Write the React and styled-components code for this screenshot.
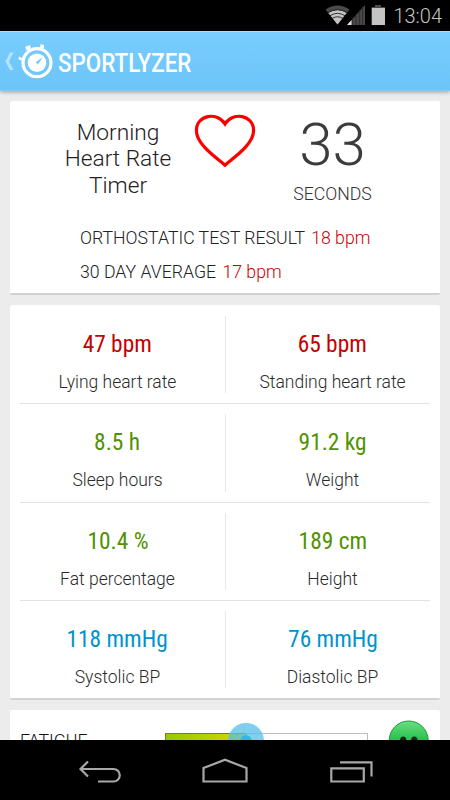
import React from 'react';
import styled, { createGlobalStyle, css } from 'styled-components';

const METRICS = [
  [
    { id: 'lying', value: '47 bpm', label: 'Lying heart rate', tone: 'heart' },
    { id: 'standing', value: '65 bpm', label: 'Standing heart rate', tone: 'heart' },
  ],
  [
    { id: 'sleep', value: '8.5 h', label: 'Sleep hours', tone: 'body' },
    { id: 'weight', value: '91.2 kg', label: 'Weight', tone: 'body' },
  ],
  [
    { id: 'fat', value: '10.4 %', label: 'Fat percentage', tone: 'body' },
    { id: 'height', value: '189 cm', label: 'Height', tone: 'body' },
  ],
  [
    { id: 'systolic', value: '118 mmHg', label: 'Systolic BP', tone: 'pressure' },
    { id: 'diastolic', value: '76 mmHg', label: 'Diastolic BP', tone: 'pressure' },
  ],
];

const TONES = {
  heart: '#c40000',
  body: '#519200',
  pressure: '#0093cc',
};

const App = () => (
  <>
    <GlobalStyle />
    <Phone>
      <StatusBar>
        <StatusIcons />
        <Clock>13:04</Clock>
      </StatusBar>
      <ActionBar>
        <BrandMark />
        <Brand>SPORTLYZER</Brand>
      </ActionBar>
      <Content>
        <TimerCard>
          <TimerTop>
            <TimerTitle>
              Morning
              <br />
              Heart Rate
              <br />
              Timer
            </TimerTitle>
            <Heart />
            <Countdown>
              <Count>33</Count>
              <Unit>SECONDS</Unit>
            </Countdown>
          </TimerTop>
          <Result>
            ORTHOSTATIC TEST RESULT <em>18 bpm</em>
          </Result>
          <Result>
            30 DAY AVERAGE <em>17 bpm</em>
          </Result>
        </TimerCard>
        <MetricsCard>
          {METRICS.map((row) => (
            <MetricRow key={row[0].id}>
              {row.map((item) => (
                <Metric key={item.id}>
                  <Value $tone={item.tone}>{item.value}</Value>
                  <Label>{item.label}</Label>
                </Metric>
              ))}
            </MetricRow>
          ))}
        </MetricsCard>
        <FatigueCard>
          <FatigueLabel>FATIGUE</FatigueLabel>
          <Track>
            <Fill />
            <Thumb />
          </Track>
          <Smiley />
        </FatigueCard>
      </Content>
      <NavBar>
        <NavIcons />
      </NavBar>
    </Phone>
  </>
);

export default App;

const StatusIcons = () => (
  <svg width="60" height="31" viewBox="325 0 60 31">
    <path d="M325.500 9.500Q337.500 1.500 349.500 9.500L337.500 24.500Z" fill="#4b4b4b" />
    <path d="M328.400 13Q337.500 7.500 346.600 13L337.500 24.500Z" fill="#c4c4c4" />
    <g fill="none" stroke="#222" strokeWidth=".9">
      <path d="M327.500 12.700Q337.500 6.300 347.500 12.700" />
      <path d="M330 15.700Q337.500 11 345 15.700" />
      <path d="M332 18.500Q337.500 15 343 18.500" />
    </g>
    <path d="M365 5V25H347Z" fill="#464646" />
    <path d="M351.500 20V25H347Z" fill="#e0e0e0" />
    <path d="M352.500 18V25M356 14V25M359.500 10V25M362.500 7V25" stroke="#2c2c2c" strokeWidth=".8" />
    <path d="M375 5H381V7H385V9H371.700V7H375Z" fill="#4b4b4b" />
    <path d="M371.700 8H385V25H371.700Z" fill="#c4c4c4" />
  </svg>
);

const BrandMark = () => (
  <svg width="54" height="60" viewBox="0 32 54 60">
    <path d="M10 52.500H13.500L9 61.500L13.500 70H10L5.500 61.500Z" fill="#b5e4ff" />
    <circle cx="37" cy="62.700" r="14" fill="none" stroke="#fff" strokeWidth="3.200" />
    <circle cx="37" cy="62.700" r="9.300" fill="#fff" />
    <path d="M42.500 57.500L38 64.200L35.800 62.300Z" fill="#6cc4f8" />
    <path d="M25.300 46.800L30 45L31 48L29.500 48.500L31 51L28 52.300L27 49.500L26 50ZM40.500 44.200L44 45V48H42.700L42.300 51L39.300 50L40.200 47.500ZM19 56.500L22 58L23.500 57.700L23 60L21 60.200L18.500 59.500Z" fill="#fff" />
  </svg>
);

const Heart = () => (
  <HeartSvg viewBox="194 113 62 56">
    <path
      d="M225 165.200C216 157.300 196.400 144.500 196.400 130.500C196.400 114.500 217.500 111.500 225 124C232.500 111.500 253.600 114.500 253.600 130.500C253.600 144.500 234 157.300 225 165.200Z"
      fill="none"
      stroke="#fb0000"
      strokeWidth="3.200"
    />
  </HeartSvg>
);

const Smiley = () => (
  <Face viewBox="0 0 42 42">
    <defs>
      <linearGradient id="face" x1="0" y1="0" x2="0" y2="1">
        <stop offset="0" stopColor="#6bdc84" />
        <stop offset=".45" stopColor="#2cc44e" />
        <stop offset="1" stopColor="#169a35" />
      </linearGradient>
    </defs>
    <circle cx="20.700" cy="20.500" r="19.500" fill="url(#face)" stroke="#189b38" />
    <ellipse cx="15.200" cy="20.500" rx="3.200" ry="4" fill="#1c2420" />
    <ellipse cx="26.300" cy="20.500" rx="3.200" ry="4" fill="#1c2420" />
    <path d="M11 28Q20.700 36 30 28" fill="none" stroke="#1c2420" strokeWidth="2" />
  </Face>
);

const NavIcons = () => (
  <svg width="450" height="60" viewBox="0 740 450 60" fill="none" stroke="#a8a8a8" strokeWidth="2.200">
    <path d="M88 761.500L80.500 769L88 776.500M80.500 769H113.500A6.200 6.200 0 0 1 113.500 781.500H98" />
    <path d="M203.500 781.500V768L225 759.800L246.500 768V781.500Z" />
    <path d="M331.300 768.300H363.800V781.500H331.300ZM340 762.300H371.500V776.500" />
  </svg>
);

const GlobalStyle = createGlobalStyle`
  * {
    box-sizing: border-box;
  }
  body {
    margin: 0;
    font-family: Roboto, 'Liberation Sans', sans-serif;
    font-weight: 300;
  }
  svg {
    display: block;
    flex: none;
  }
`;

const Phone = styled.div`
  width: 450px;
  height: 800px;
  display: flex;
  flex-direction: column;
  overflow: hidden;
  background: #ececec;
`;

const StatusBar = styled.div`
  height: 31px;
  flex: none;
  display: flex;
  justify-content: flex-end;
  padding-right: 8px;
  background: #000;
`;

const Clock = styled.span`
  width: 50px;
  margin-left: 7px;
  color: #c4c4c4;
  font-size: 20px;
  line-height: 33px;
  text-align: right;
  white-space: nowrap;
`;

const ActionBar = styled.header`
  height: 60px;
  flex: none;
  display: flex;
  position: relative;
  background: linear-gradient(#79cdff, #6cc4f8);
  border-top: 1px solid #a4dcfc;
  border-bottom: 1px solid #84cbf3;
  box-shadow: 0 1px 4px rgba(0, 0, 0, 0.35);
`;

const Brand = styled.span`
  margin-left: 4px;
  color: #fff;
  font-size: 25px;
  font-weight: 500;
  line-height: 63px;
  transform: scaleX(0.895);
  transform-origin: left;
`;

const Content = styled.main`
  flex: 1;
  min-height: 0;
  display: flex;
  flex-direction: column;
  gap: 10px;
  padding: 10px 10px 0;
  overflow: hidden;
`;

const card = css`
  flex: none;
  background: #fff;
  border-radius: 2px;
  border-bottom: 2px solid #d2d2d2;
`;

const TimerCard = styled.section`
  ${card}
  height: 194px;
`;

const TimerTop = styled.div`
  height: 120px;
  display: flex;
`;

const TimerTitle = styled.h1`
  width: 132px;
  margin: 19px 10px 0 42px;
  color: #222;
  font-size: 22.7px;
  font-weight: 300;
  line-height: 26.3px;
  text-align: center;
`;

const HeartSvg = styled.svg`
  width: 62px;
  height: 56px;
  margin-top: 12px;
`;

const Countdown = styled.div`
  width: 153px;
  display: flex;
  flex-direction: column;
  align-items: center;
`;

const Count = styled.div`
  height: 76px;
  color: #3c3c3c;
  font-size: 60px;
  line-height: 87px;
`;

const Unit = styled.div`
  color: #333;
  font-size: 17.7px;
  line-height: 35px;
`;

const Result = styled.p`
  margin: 0;
  padding-left: 70px;
  color: #222;
  font-size: 17.7px;
  line-height: 34px;
  white-space: nowrap;
  em {
    margin-left: 2px;
    color: #cc0000;
    font-style: normal;
  }
`;

const MetricsCard = styled.section`
  ${card}
  height: 395px;
  padding: 0 10px;
`;

const MetricRow = styled.div`
  height: 98.3px;
  display: flex;
  padding: 10px 0;
  border-top: 1px solid transparent;
  & + & {
    border-color: #e2e2e2;
  }
`;

const Metric = styled.div`
  flex: 1;
  display: flex;
  flex-direction: column;
  align-items: center;
  padding-right: 10px;
  & + & {
    border-left: 1px solid #e8e8e8;
    padding: 0 0 0 9px;
  }
`;

const Value = styled.div`
  height: 43px;
  color: ${(props) => TONES[props.$tone]};
  font-family: 'Roboto Condensed', Roboto, sans-serif;
  font-size: 24.5px;
  font-weight: 400;
  line-height: 56px;
  white-space: nowrap;
  transform: scaleX(0.955);
`;

const Label = styled.div`
  color: #2a2a2a;
  font-size: 17.5px;
  line-height: 47px;
  white-space: nowrap;
`;

const FatigueCard = styled.section`
  ${card}
  height: 72px;
  display: flex;
  align-items: flex-start;
  padding: 9px 10px;
`;

const FatigueLabel = styled.span`
  width: 145px;
  color: #111;
  font-size: 17.7px;
  line-height: 45px;
`;

const Track = styled.div`
  width: 203px;
  height: 20px;
  margin: 14px 20px 0 0;
  position: relative;
  border: 1px solid #bcbcbc;
`;

const Fill = styled.div`
  width: 81px;
  height: 18px;
  background: linear-gradient(90deg, #98c800, #d8d800);
  box-shadow: -1px -1px 0 #70802c;
`;

/* touch halo around the slider's handle */
const Thumb = styled.span`
  width: 36px;
  height: 36px;
  position: absolute;
  top: -11px;
  left: 62px;
  border-radius: 50%;
  background: radial-gradient(circle, #33b5e5 0 5.5px, rgba(85, 190, 232, 0.75) 6px);
`;

const Face = styled.svg`
  width: 42px;
  height: 42px;
  margin-top: 1px;
`;

const NavBar = styled.nav`
  height: 60px;
  flex: none;
  background: #000;
`;
